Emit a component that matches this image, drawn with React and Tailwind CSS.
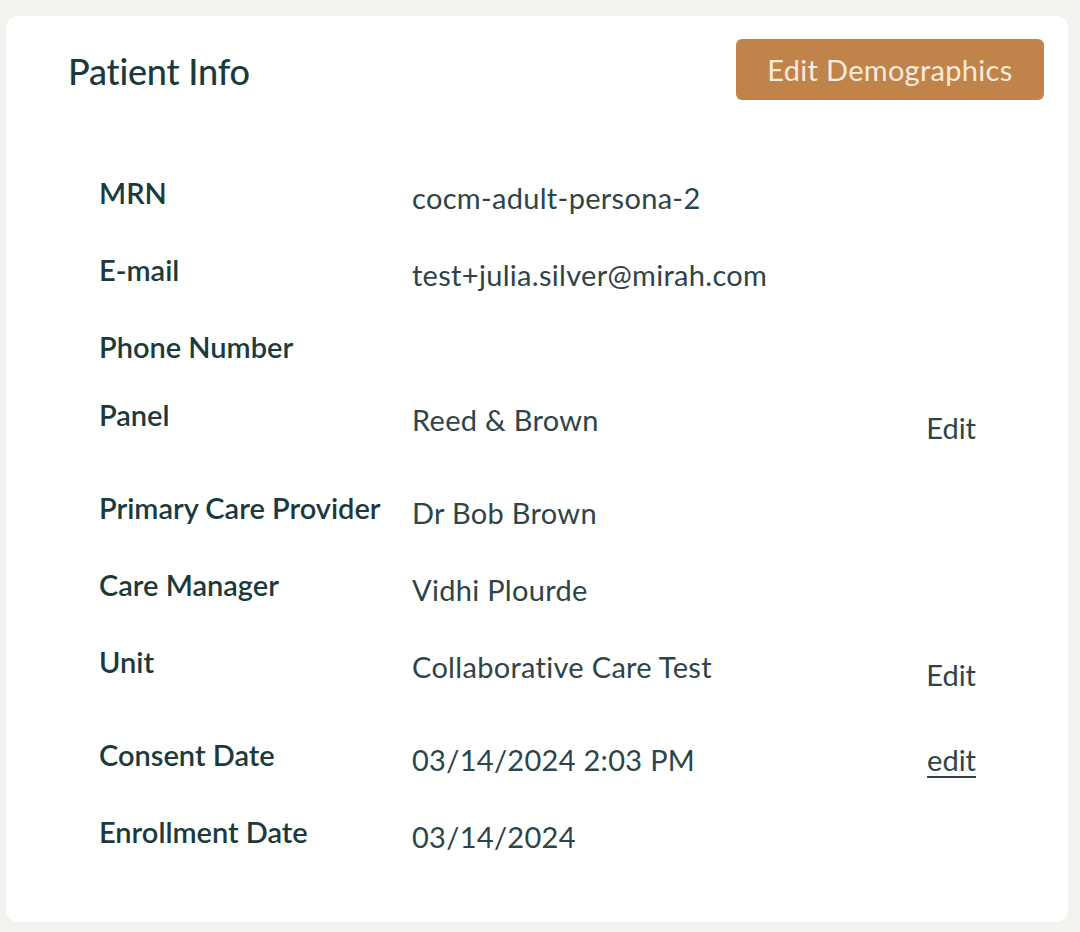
import React from "react";

const rows = [
  { label: "MRN", value: "cocm-adult-persona-2", h: "h-[77px]" },
  { label: "E-mail", value: "test+julia.silver@mirah.com", h: "h-[77px]" },
  { label: "Phone Number", value: "", h: "h-[68px]" },
  { label: "Panel", value: "Reed & Brown", h: "h-[93px]", action: "button" },
  { label: "Primary Care Provider", value: "Dr Bob Brown", h: "h-[77px]" },
  { label: "Care Manager", value: "Vidhi Plourde", h: "h-[77px]" },
  { label: "Unit", value: "Collaborative Care Test", h: "h-[93px]", action: "button" },
  { label: "Consent Date", value: "03/14/2024 2:03 PM", h: "h-[77px]", action: "link" },
  { label: "Enrollment Date", value: "03/14/2024", h: "h-[77px]" },
];

function InfoRow({ row }) {
  return (
    <div className={`flex items-start ${row.h}`}>
      <div className="w-[313px] pt-[5px] text-[29px] leading-[36px] font-semibold text-[#1c3a3c]">
        {row.label}
      </div>
      <div className="flex-1 pt-[10px] text-[29px] leading-[36px] tracking-[0.3px] text-[#2e4446]">
        {row.value}
      </div>
      {row.action === "button" && (
        <button className="pt-[18px] text-[29px] leading-[36px] text-[#2e4446]">Edit</button>
      )}
      {row.action === "link" && (
        <a className="pt-[10px] text-[29px] leading-[36px] text-[#2e4446] underline underline-offset-[5px]">
          edit
        </a>
      )}
    </div>
  );
}

export default function App() {
  return (
    <div className="min-h-[932px] bg-[#f4f2ee] pt-4 pl-[6px] pr-3 font-['Lato',sans-serif]">
      <div className="bg-white rounded-xl pb-9">
        <div className="flex items-start justify-between pl-[62px] pr-6 pt-[23px]">
          <h2 className="pt-[10px] text-[36px] leading-[44px] font-medium tracking-[-0.2px] text-[#1c3a3c]">
            Patient Info
          </h2>
          <button className="w-[308px] h-[61px] rounded-md bg-[#c0834a] text-[29px] tracking-[0.3px] text-[#f7ecdd]">
            Edit Demographics
          </button>
        </div>
        <div className="mt-[70px] pl-[93px] pr-[92px]">
          {rows.map((row) => (
            <InfoRow key={row.label} row={row} />
          ))}
        </div>
      </div>
    </div>
  );
}
